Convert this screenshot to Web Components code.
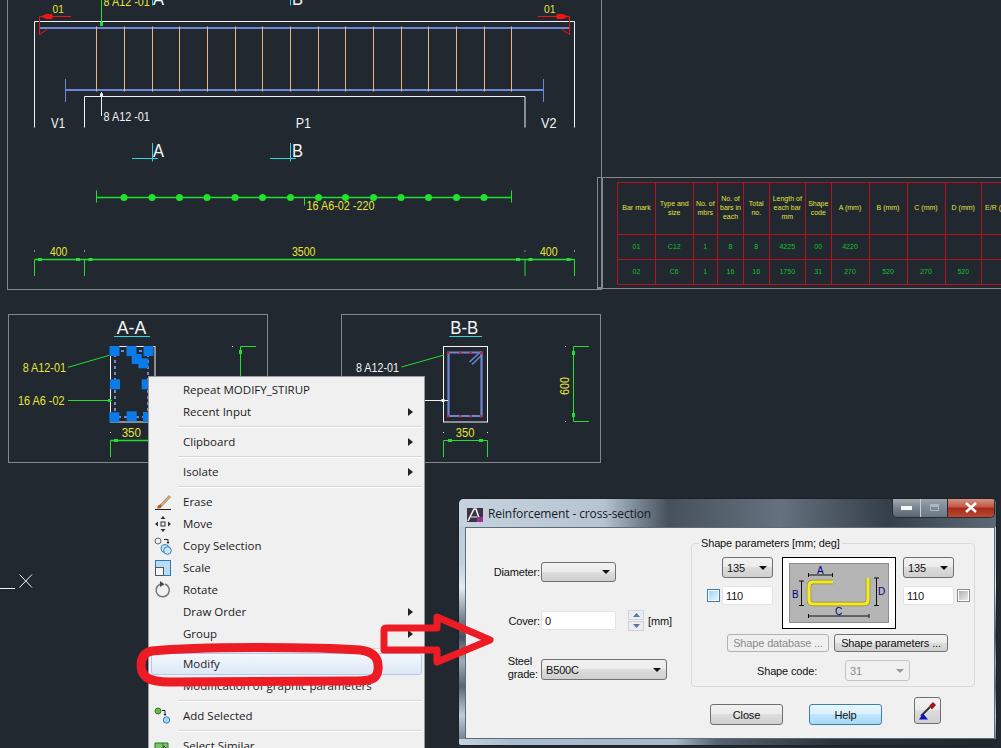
<!DOCTYPE html>
<html>
<head>
<meta charset="utf-8">
<title>Reinforcement</title>
<style>
  html, body { margin: 0; height: 100%; }
  body {
    width: 1001px; height: 748px; overflow: hidden; position: relative;
    background: #212830; font-family: "Liberation Sans", Arial, sans-serif;
  }
</style>
</head>
<body>
<cad-drawing></cad-drawing>
<cad-schedule></cad-schedule>

<ctx-menu>
  <ctx-item>Repeat MODIFY_STIRUP</ctx-item>
  <ctx-item arrow>Recent Input</ctx-item>
  <ctx-sep></ctx-sep>
  <ctx-item arrow>Clipboard</ctx-item>
  <ctx-sep></ctx-sep>
  <ctx-item arrow>Isolate</ctx-item>
  <ctx-sep></ctx-sep>
  <ctx-item>
    <svg slot="icon" width="18" height="18" viewBox="0 0 18 18"><path d="M1 16.5h16" stroke="#222" fill="none"/><path d="M6 12L15 2.5l1.6 1.6L8 13z" fill="#d8b078" stroke="#8a6a3c" stroke-width=".6"/><path d="M3.2 15.2c0-2.4 1.4-3.7 3-3.4l1.5 1.5c.2 1.7-2.2 2.4-4.5 1.9z" fill="#c8501c"/></svg>
    Erase
  </ctx-item>
  <ctx-item>
    <svg slot="icon" width="18" height="18" viewBox="0 0 18 18" fill="#333"><rect x="7" y="7" width="4" height="4" fill="none" stroke="#333"/><path d="M9 1l2.5 3h-5zM9 17l2.5-3h-5zM1 9l3-2.5v5zM17 9l-3-2.5v5z"/></svg>
    Move
  </ctx-item>
  <ctx-item>
    <svg slot="icon" width="18" height="18" viewBox="0 0 18 18" fill="none"><circle cx="4" cy="4" r="3" stroke="#666"/><path d="M10 2.5h4v3" stroke="#222"/><path d="M12.5 5l1.5 2 1.5-2z" fill="#222"/><circle cx="11" cy="11.5" r="4" stroke="#2a80c8" fill="#cfe6f8"/><circle cx="13.5" cy="13.5" r="3.8" stroke="#2a80c8" fill="#cfe6f8"/></svg>
    Copy Selection
  </ctx-item>
  <ctx-item>
    <svg slot="icon" width="18" height="18" viewBox="0 0 18 18"><rect x="1.5" y="1.5" width="15" height="15" fill="#b8dcf4" stroke="#2a7ab8"/><rect x="1.5" y="8.5" width="8" height="8" fill="#f4f4f4" stroke="#555"/></svg>
    Scale
  </ctx-item>
  <ctx-item>
    <svg slot="icon" width="18" height="18" viewBox="0 0 18 18" fill="none"><path d="M6 3.2A6.6 6.6 0 1 0 11 3" stroke="#777" stroke-width="1.5"/><path d="M6 0l4.5 3.2L6 6z" fill="#444"/></svg>
    Rotate
  </ctx-item>
  <ctx-item arrow>Draw Order</ctx-item>
  <ctx-item arrow>Group</ctx-item>
  <ctx-sep></ctx-sep>
  <ctx-item active>Modify</ctx-item>
  <ctx-item>Modification of graphic parameters</ctx-item>
  <ctx-sep></ctx-sep>
  <ctx-item>
    <svg slot="icon" width="18" height="18" viewBox="0 0 18 18" fill="none"><circle cx="4" cy="4" r="3" fill="#6cb84c" stroke="#3a7a28"/><path d="M8 3.5h3v4" stroke="#222"/><path d="M9.5 7l1.5 2 1.5-2z" fill="#222"/><circle cx="12.5" cy="13" r="3.2" fill="#a8d4f4" stroke="#2a80c8"/></svg>
    Add Selected
  </ctx-item>
  <ctx-sep></ctx-sep>
  <ctx-item>
    <svg slot="icon" width="18" height="18" viewBox="0 0 18 18"><path d="M1 6h13v9H1z" fill="#7cc46c" stroke="#2f6e2a"/><path d="M9 6v9" stroke="#2f6e2a"/><path d="M10 9l6 6h-6z" fill="#fff" stroke="#333"/></svg>
    Select Similar
  </ctx-item>
</ctx-menu>

<win-dialog title="Reinforcement - cross-section">
  <section-form></section-form>
</win-dialog>

<red-markup></red-markup>

<script>
// Inline cad helpers, everything on the model space goes through these
function line(x1, y1, x2, y2, color, w) {
  return `<line x1="${x1}" y1="${y1}" x2="${x2}" y2="${y2}" stroke="${color}" stroke-width="${w || 1}"/>`;
}
function label(x, base, str, color, size, len) {
  const fit = len ? `textLength="${len}" lengthAdjust="spacingAndGlyphs"` : '';
  return `<text x="${x}" y="${base}" fill="${color}" font-size="${size}" ${fit}>${str}</text>`;
}
function box(x, y, w, h, color) {
  return `<rect x="${x}" y="${y}" width="${w}" height="${h}" fill="${color}"/>`;
}

const WHITE = '#f2f4f4', GREEN = '#22e02c', YELLOW = '#e6e63a', BLUE = '#6f86d6';
const CYAN = '#35d4d8', RED = '#f01414', FRAME = '#83878b', GRIP = '#0c7bea', ORANGE = '#e9b67e';

class CadDrawing extends HTMLElement {
  constructor() {
    super();
    this.attachShadow({ mode: 'open' });
    this.shadowRoot.innerHTML = `
      <style>
        :host { display: block; position: absolute; left: 0; top: 0; width: 1001px; height: 748px; }
        svg { display: block; font-family: "Liberation Sans", Arial, sans-serif; }
      </style>
      <svg width="1001" height="748" viewBox="0 0 1001 748">
        ${this.elevation()}
        ${this.sectionA()}
        ${this.sectionB()}
        ${line(0, 588.5, 15, 588.5, WHITE)}
        ${line(19.5, 574.5, 32, 587.5, WHITE)}${line(32, 574.5, 19.5, 587.5, WHITE)}
      </svg>
    `;
  }

  elevation() {
    let s = '';
    // sheet frames
    s += line(7.5, 0, 7.5, 289.5, FRAME) + line(7, 289.5, 601.5, 289.5, FRAME) + line(601.5, 0, 601.5, 290, FRAME);
    s += `<path d="M34.5 127.5V21.5H574.5V127.5M84.5 127.5V96.5H525V127.5" fill="none" stroke="${WHITE}"/>`;
    // bars
    s += line(39, 28, 570, 28, BLUE, 2) + line(65.5, 90, 543.5, 90, BLUE, 2);
    s += line(65.5, 79, 65.5, 102, BLUE) + line(543.5, 79, 543.5, 102, BLUE);
    // stirrups
    [96.5, 124.5, 152.5, 179.5, 207.5, 235.5, 262.5, 290.5, 318.5, 345.5, 373.5, 401.5, 428.5, 456.5, 484.5, 511.5].forEach(x => {
      s += line(x, 26.5, x, 91.5, ORANGE);
    });
    // bar mark leaders
    s += line(101.5, 0, 101.5, 24, GREEN) + box(100, 22, 3, 4, GREEN);
    s += label(103.5, 6, '8 A12 -01', YELLOW, 12, 46.3);
    s += line(101.5, 92, 101.5, 116, WHITE) + box(100, 93.5, 3, 3, WHITE);
    s += label(103.5, 121, '8 A12 -01', WHITE, 12, 46.3);
    // red section ends
    s += label(52.5, 13, '01', YELLOW, 11.5, 11.3) + label(544, 13, '01', YELLOW, 11.5, 11.5);
    s += `<g fill="none" stroke="${RED}">
      <path d="M71 16.5H39.5V34.5L47.5 29M538 16.5H569.5V34.5L561.5 29"/>
      <path d="M42 16.5L46 14.5H52V18.5H46zM567 16.5L563 14.5H557V18.5H563z" fill="${RED}"/>
    </g>`;
    s += label(51, 128, 'V1', WHITE, 15, 14) + label(295.7, 128, 'P1', WHITE, 15, 15.3) + label(541, 128, 'V2', WHITE, 15, 15.5);
    // section marks, the upper pair runs off the sheet
    [[152.5, 132, 158, 'A', 153], [290.5, 270, 296, 'B', 292]].forEach(m => {
      s += line(m[0], 0, m[0], 5.5, CYAN) + label(m[4], 5, m[3], WHITE, 18, 11);
      s += line(m[0], 143, m[0], 161.5, CYAN) + line(m[1], 158.5, m[2], 158.5, CYAN);
      s += label(m[4], 157.3, m[3], WHITE, 18, 11);
    });
    // stirrup distribution
    s += line(96.5, 197.5, 511.5, 197.5, GREEN, 1.4) + line(96.5, 190.5, 96.5, 202.5, GREEN) + line(511.5, 190.5, 511.5, 202.5, GREEN);
    [124, 152, 179.5, 207, 235, 262.5, 290.5, 318.5, 345.5, 373.5, 401, 428.5, 456.5, 484].forEach(x => {
      s += `<circle cx="${x}" cy="197.5" r="3.5" fill="${GREEN}"/>`;
    });
    s += line(304.5, 197.5, 304.5, 205.5, GREEN) + label(306.5, 210, '16 A6-02 -220', YELLOW, 12, 68);
    // dimension line
    s += line(34.5, 259.5, 574.5, 259.5, GREEN, 1.4);
    [34.5, 84.5, 525, 574.5].forEach(x => {
      s += line(x, 259.5, x, 276, GREEN) + box(x - .5, 250.5, 1, 1, WHITE);
    });
    [38, 76, 88.5, 516, 528.5, 566.5].forEach(x => { s += box(x, 258, 4, 3, GREEN); });
    s += label(50, 256, '400', YELLOW, 12, 17.3) + label(292, 256, '3500', YELLOW, 12, 23.5) + label(540, 256, '400', YELLOW, 12, 17.6);
    return s;
  }

  sectionA() {
    let s = `<rect x="8.5" y="314.5" width="259" height="148" fill="none" stroke="${FRAME}"/>`;
    s += label(116.7, 334, 'A-A', WHITE, 18, 29.5) + line(114, 336.5, 150, 336.5, CYAN);
    s += `<rect x="110.5" y="346.5" width="44.5" height="75.5" fill="none" stroke="${WHITE}"/>`;
    s += `<rect x="115" y="351" width="33" height="66" fill="none" stroke="${BLUE}" stroke-width="2" stroke-dasharray="3 3"/>`;
    s += label(22.7, 372, '8 A12-01', YELLOW, 12, 43.3) + line(68, 367.3, 109.3, 355.3, GREEN);
    s += label(18, 405, '16 A6 -02', YELLOW, 12, 46.5) + line(68, 400.5, 112, 400.5, GREEN) + box(108, 399, 3, 3, GREEN);
    [[114.5, 351], [131.5, 351], [148.5, 351], [136.7, 359], [143.3, 363.3], [115, 384.3], [146.7, 384.3], [114.3, 417.3], [131.7, 416.3], [148, 417]].forEach(g => {
      s += box(g[0] - 5, g[1] - 5, 10, 10, GRIP);
    });
    s += label(121.7, 437, '350', YELLOW, 12, 19.3);
    s += line(110.5, 440.5, 155, 440.5, GREEN, 1.4) + line(110.5, 440.5, 110.5, 457, GREEN) + box(114, 439, 4, 3, GREEN);
    s += box(110, 432, 1, 1, WHITE);
    s += box(232, 346, 1, 1, WHITE) + line(240.5, 346.5, 256, 346.5, GREEN) + line(240.5, 346.5, 240.5, 421, GREEN) + box(239, 350, 3, 4, GREEN);
    return s;
  }

  sectionB() {
    let s = `<rect x="341.5" y="314.5" width="259" height="148" fill="none" stroke="${FRAME}"/>`;
    s += label(450.3, 334, 'B-B', WHITE, 18, 28) + line(449.3, 336.5, 482, 336.5, CYAN);
    s += `<rect x="443.5" y="346.5" width="44" height="75.5" fill="none" stroke="${WHITE}"/>`;
    s += `<path d="M481.5 352.5H448.5V416H481.5Z" fill="none" stroke="${BLUE}" stroke-width="2.2"/>`;
    s += line(469.5, 362, 481, 351.5, BLUE, 1.5) + line(472, 364.5, 482, 355, BLUE, 1.5);
    [448, 460, 470.3, 480.7].forEach(x => {
      s += box(x - 1, 351.5, 2.5, 2.5, '#d02040') + box(x - 1, 415, 2.5, 2.5, '#d02040');
    });
    s += label(356, 372, '8 A12-01', WHITE, 12, 43) + line(401.5, 367, 444, 355, GREEN);
    s += line(425, 400.5, 448, 400.5, WHITE) + box(441.5, 399, 3, 3, WHITE);
    s += label(455.7, 437, '350', YELLOW, 12, 18.7);
    s += `<path d="M443.5 457V440.5H487.5V457" fill="none" stroke="${GREEN}"/>` + box(448, 439, 4, 3, GREEN) + box(479, 439, 4, 3, GREEN);
    s += box(443, 432, 1, 1, WHITE) + box(487, 432, 1, 1, WHITE);
    s += `<text transform="translate(568.5 395) rotate(-90)" fill="${YELLOW}" font-size="12" textLength="18" lengthAdjust="spacingAndGlyphs">600</text>`;
    s += `<path d="M589 346.5H573.5V421.5H589" fill="none" stroke="${GREEN}"/>` + box(572, 351, 3, 4, GREEN) + box(572, 413, 3, 4, GREEN);
    s += box(565, 346, 1, 1, WHITE) + box(565, 421, 1, 1, WHITE);
    return s;
  }
}
customElements.define('cad-drawing', CadDrawing);

class CadSchedule extends HTMLElement {
  constructor() {
    super();
    const heads = ['Bar mark', 'Type and<br>size', 'No. of<br>mbrs', 'No. of<br>bars in<br>each', 'Total<br>no.', 'Length of<br>each bar<br>mm', 'Shape<br>code', 'A (mm)', 'B (mm)', 'C (mm)', 'D (mm)', 'E/R (mm)'];
    const rows = [
      ['01', 'C12', '1', '8', '8', '4225', '00', '4220', '', '', '', ''],
      ['02', 'C6', '1', '16', '16', '1750', '31', '270', '520', '270', '520', '']
    ];
    const cells = heads.map(h => `<div class="head">${h}</div>`).join('') +
      rows.map(r => r.map(c => `<div>${c}</div>`).join('')).join('');
    this.attachShadow({ mode: 'open' });
    this.shadowRoot.innerHTML = `
      <style>
        :host { display: block; position: absolute; left: 617px; top: 182px; }
        .outer { position: absolute; left: -20.5px; top: -5px; width: 500px; height: 112px; border: 1px solid #83878b; border-width: 1px 0; box-sizing: border-box; }
        .outer::before { content: ""; position: absolute; left: 0; top: 0; width: 6px; height: 100%; box-sizing: border-box; border: 1px solid #83878b; border-top: 0; }
        .grid {
          position: relative; display: grid; width: 401px;
          grid-template-columns: 38px 37.5px 24.5px 26px 25.5px 36.5px 25.5px 38px 38px 38px 36.5px 37px;
          grid-template-rows: 52px 25px 25px;
          border: solid #b8121e; border-width: 1px 0 0 1px;
          font: 7px/8.7px "Liberation Sans", Arial, sans-serif; color: #10c42c;
        }
        .grid div {
          display: flex; align-items: center; justify-content: center; text-align: center;
          box-sizing: border-box; border: solid #b8121e; border-width: 0 1px 1px 0; white-space: nowrap;
        }
        .grid .head { color: #e4e23c; }
      </style>
      <div class="outer"></div>
      <div class="grid">${cells}</div>
    `;
  }
}
customElements.define('cad-schedule', CadSchedule);

class CtxMenu extends HTMLElement {
  constructor() {
    super();
    this.attachShadow({ mode: 'open' });
    this.shadowRoot.innerHTML = `
      <style>
        :host {
          display: block; position: absolute; left: 148px; top: 376px; width: 277px; height: 390px;
          box-sizing: border-box; padding: 2px; background: #f0f0f0; border: 1px solid #9b9b9b;
          font: 11.5px "Open Sans", sans-serif; color: #1b1b1b;
        }
      </style>
      <slot></slot>
    `;
  }
}
customElements.define('ctx-menu', CtxMenu);

class CtxItem extends HTMLElement {
  constructor() {
    super();
    this.attachShadow({ mode: 'open' });
    this.shadowRoot.innerHTML = `
      <style>
        :host { display: flex; align-items: center; height: 22px; box-sizing: border-box; padding-right: 8px; border: 1px solid transparent; border-radius: 3px; }
        :host([active]) { border-color: #aecbec; background: linear-gradient(#f3f7fc, #dde8f5); }
        .icon { flex: 0 0 31px; display: flex; align-items: center; padding-left: 2px; box-sizing: border-box; height: 18px; }
        .text { flex: 1; white-space: nowrap; margin-top: -2px; }
        .arrow { display: none; width: 0; height: 0; border: 4px solid transparent; border-left: 5px solid #222; border-right: 0; }
        :host([arrow]) .arrow { display: block; }
      </style>
      <div class="icon"><slot name="icon"></slot></div>
      <div class="text"><slot></slot></div>
      <div class="arrow"></div>
    `;
  }
}
customElements.define('ctx-item', CtxItem);

class CtxSep extends HTMLElement {
  constructor() {
    super();
    this.attachShadow({ mode: 'open' });
    this.shadowRoot.innerHTML = `
      <style>
        :host { display: flex; align-items: center; height: 8px; padding-left: 27px; }
        div { flex: 1; height: 1px; background: #d7d7d7; border-bottom: 1px solid #fff; }
      </style>
      <div></div>
    `;
  }
}
customElements.define('ctx-sep', CtxSep);

class WinDialog extends HTMLElement {
  constructor() {
    super();
    this.attachShadow({ mode: 'open' });
    this.shadowRoot.innerHTML = `
      <style>
        :host {
          display: flex; flex-direction: column; position: absolute; left: 458px; top: 498px; width: 539px; height: 248px;
          box-sizing: border-box; border: 1px solid #1c2126; border-radius: 6px 6px 3px 3px; overflow: hidden;
          background: linear-gradient(180deg, #bccbd8 0, #c2d0dc 26%, #e6eaee 36%, #8b98a6 46%, #47515b 56%, #a3adb7 66%, #5a6672 76%, #c0ccd8 88%, #64727f 100%);
          font: 11px "Liberation Sans", Arial, sans-serif; letter-spacing: -.15px; color: #111;
        }
        .title {
          flex: 0 0 28px; display: flex; align-items: center; gap: 5px; padding: 3px 0 0 8px; box-sizing: border-box; position: relative;
          background:
            linear-gradient(90deg, transparent 27%, rgba(40,50,60,.78) 39%, rgba(60,70,82,.6) 60%, rgba(35,45,55,.85) 80%, rgba(60,70,80,.6) 100%),
            linear-gradient(90deg, #c6d3de, #aebdcc 40%, #8d9cac);
        }
        .title span { font: 12px "Open Sans", sans-serif; color: #161a1e; letter-spacing: -.1px; margin-top: -2px; }
        .caps { position: absolute; right: 1px; top: -1px; display: flex; height: 20px; width: 103px; box-sizing: border-box; border: 1px solid #262c32; border-top: 0; border-radius: 0 0 5px 5px; overflow: hidden; }
        .caps div { display: flex; align-items: center; justify-content: center; }
        .min { width: 27px; background: linear-gradient(#a8b0b8, #7c8690 50%, #59636d); border-right: 1px solid #c8d0d8; }
        .max { width: 26px; background: linear-gradient(#9aa6b0, #7f8c98 50%, #6a7884); border-right: 1px solid #262c32; }
        .close { flex: 1; background: linear-gradient(#d59a8c, #c55a48 45%, #a92a1a 55%, #b84a34); }
        .client { flex: 1; margin: 0 1px 0 6px; background: #f0f0f0; border: 1px solid #5d6a78; }
        .foot { flex: 0 0 6px; background: linear-gradient(90deg, #c6d3de 0, #a9bccd 10%, #a9b9c9 40%, #56626e 48%, #2b333b 70%, #1f262c 100%); }
      </style>
      <div class="title">
        <svg width="16" height="14" viewBox="0 0 16 14"><rect width="16" height="14" fill="#3d3346"/><path d="M1 13L7 1h2l3 9" fill="none" stroke="#f1eff3" stroke-width="1.6"/><path d="M4 9h6" stroke="#f1eff3"/><rect x="10" y="9" width="6" height="5" fill="#a0308c"/></svg>
        <span>${this.getAttribute('title')}</span>
        <div class="caps">
          <div class="min"><svg width="11" height="4"><rect width="11" height="4" fill="#f4f6f8"/></svg></div>
          <div class="max"><svg width="9" height="7"><rect x=".5" y=".5" width="8" height="6" fill="none" stroke="#aeb6be"/><rect x="1" y="1" width="7" height="2" fill="#aeb6be"/></svg></div>
          <div class="close"><svg width="14" height="11" viewBox="0 0 14 11"><path d="M2 1l10 9M12 1L2 10" stroke="#fff" stroke-width="2.6"/></svg></div>
        </div>
      </div>
      <div class="client"><slot></slot></div>
      <div class="foot"></div>
    `;
  }
}
customElements.define('win-dialog', WinDialog);

class WinButton extends HTMLElement {
  constructor() {
    super();
    this.attachShadow({ mode: 'open' });
    this.shadowRoot.innerHTML = `
      <style>
        :host {
          display: flex; align-items: center; justify-content: center; box-sizing: border-box;
          border: 1px solid #707070; border-radius: 3px; white-space: nowrap;
          background: linear-gradient(#f2f2f2, #ebebeb 49%, #ddd 50%, #cfcfcf);
        }
        :host([hot]) { border-color: #3c7fb1; background: linear-gradient(#eaf6fd, #d9f0fc 49%, #bee6fd 50%, #a7d9f5); }
        :host([disabled]) { border-color: #adb2b5; background: #f0f0f0; color: #8a8a8a; }
      </style>
      <slot></slot>
    `;
  }
}
customElements.define('win-button', WinButton);

class WinSelect extends HTMLElement {
  constructor() {
    super();
    this.attachShadow({ mode: 'open' });
    this.shadowRoot.innerHTML = `
      <style>
        :host {
          display: flex; align-items: center; box-sizing: border-box; padding: 0 5px 0 4px;
          border: 1px solid #707070; border-radius: 3px;
          background: linear-gradient(#f2f2f2, #ebebeb 49%, #ddd 50%, #cfcfcf);
        }
        :host([disabled]) { border-color: #c4c4c4; background: #f0f0f0; color: #8a8a8a; }
        .value { flex: 1; }
        i { width: 0; height: 0; border: 4px solid transparent; border-top: 4px solid #111; border-bottom: 0; }
        :host([disabled]) i { border-top-color: #9a9a9a; }
      </style>
      <div class="value"><slot></slot></div>
      <i></i>
    `;
  }
}
customElements.define('win-select', WinSelect);

class WinInput extends HTMLElement {
  constructor() {
    super();
    this.attachShadow({ mode: 'open' });
    this.shadowRoot.innerHTML = `
      <style>
        :host { display: flex; align-items: center; box-sizing: border-box; padding-left: 3px; background: #fff; border: 1px solid #e2e3e5; border-radius: 2px; }
      </style>
      <slot></slot>
    `;
  }
}
customElements.define('win-input', WinInput);

class WinCheck extends HTMLElement {
  constructor() {
    super();
    this.attachShadow({ mode: 'open' });
    this.shadowRoot.innerHTML = `
      <style>
        :host { display: block; width: 13px; height: 13px; box-sizing: border-box; border: 1px solid #8e8f8f; background: #fff; padding: 1px; }
        :host([hot]) { border-color: #3c7fb1; }
        div { height: 100%; background: linear-gradient(135deg, #b0b0b0, #ececec); }
        :host([hot]) div { background: linear-gradient(135deg, #9fd4f6, #e6f5fd); }
      </style>
      <div></div>
    `;
  }
}
customElements.define('win-check', WinCheck);

class WinSpin extends HTMLElement {
  constructor() {
    super();
    this.attachShadow({ mode: 'open' });
    this.shadowRoot.innerHTML = `
      <style>
        :host { display: flex; flex-direction: column; gap: 1px; width: 16px; height: 21px; flex: none; }
        div { flex: 1; display: flex; align-items: center; justify-content: center; border: 1px solid #d4d4d4; background: #e7edf3; }
        svg { display: block; }
      </style>
      <div><svg width="7" height="4"><path d="M3.5 0L7 4H0z" fill="#5f6f9f"/></svg></div>
      <div><svg width="7" height="4"><path d="M0 0h7L3.5 4z" fill="#5f6f9f"/></svg></div>
    `;
  }
}
customElements.define('win-spin', WinSpin);

class ShapePreview extends HTMLElement {
  constructor() {
    super();
    this.attachShadow({ mode: 'open' });
    this.shadowRoot.innerHTML = `
      <style>
        :host { display: block; width: 114px; height: 72px; box-sizing: border-box; background: #fff; border: 1px solid #000; padding: 5px 6px; }
        svg { display: block; font: 10px "Liberation Sans", Arial, sans-serif; }
      </style>
      <svg width="100" height="60" viewBox="0 0 100 60">
        <rect x=".5" y=".5" width="99" height="59" fill="#b5b5b5" stroke="#8d8d8d"/>
        <path d="M44 19H24Q20 19 20 23V37Q20 41 24 41H75Q79 41 79 37V15" fill="none" stroke="#8f8a2a" stroke-width="4.4"/>
        <path d="M44 19H24Q20 19 20 23V37Q20 41 24 41H75Q79 41 79 37V15" fill="none" stroke="#f2ea2c" stroke-width="3.2"/>
        <g stroke="#111" fill="none">
          <path d="M19.5 12H43.5M19.5 10V14M43.5 10V14"/>
          <path d="M12.5 18V42.5M10 18H15M10 42.5H15"/>
          <path d="M19.5 53H80M19.5 51V55M80 51V55"/>
          <path d="M87.5 15V42.5M85 15H90M85 42.5H90"/>
        </g>
        <g fill="#000080">
          <text x="28" y="11">A</text><text x="3" y="35">B</text>
          <text x="46" y="52">C</text><text x="89" y="32">D</text>
        </g>
      </svg>
    `;
  }
}
customElements.define('shape-preview', ShapePreview);

class SectionForm extends HTMLElement {
  constructor() {
    super();
    this.attachShadow({ mode: 'open' });
    this.shadowRoot.innerHTML = `
      <style>
        :host { display: grid; grid-template-columns: 225px 284px; align-items: start; }
        .left {
          display: grid; grid-template-columns: 74px 126px; column-gap: 1px; row-gap: 29px;
          grid-template-rows: 20px 19px 21px; align-items: center; padding-top: 34px;
        }
        .left .lab { text-align: right; white-space: nowrap; }
        .steel { justify-self: end; line-height: 13px; margin-top: -3px; margin-right: 2px; }
        .cover { display: flex; align-items: center; white-space: nowrap; }
        .cover win-input { flex: none; width: 75px; height: 19px; }
        .cover win-spin { margin: 0 4px 0 12px; }
        win-select.dia { width: 75px; height: 20px; }
        win-select.grade { width: 126px; height: 21px; }
        fieldset {
          margin: 9px 0 0; padding: 8px 0 0 15px; height: 150px; box-sizing: border-box;
          border: 1px solid #d9d9d9; border-radius: 4px; min-width: 0;
        }
        legend { padding: 0 2px; margin-left: -8px; white-space: nowrap; }
        .shape {
          display: grid; grid-template-columns: 15px 51px 9px 114px 7px 51px 3px 13px;
          grid-template-rows: 21px 8px 19px 24px; align-items: center;
        }
        .shape win-select { height: 21px; grid-row: 1; }
        .shape win-input { height: 19px; grid-row: 3; }
        .shape win-check { grid-row: 3; }
        .shape shape-preview { grid-row: 1 / 5; grid-column: 4; }
        .btns { display: flex; gap: 5px; margin: 5px 0 0 20px; }
        .btns win-button { height: 18px; }
        .code { display: flex; align-items: center; margin: 8px 0 0 50px; }
        .code span { width: 88px; }
        .code win-select { width: 65px; height: 21px; }
        .bottom { grid-column: 1 / -1; display: flex; align-items: flex-start; padding: 10px 0 0 244px; }
        .bottom .push { width: 73px; height: 21px; margin-top: 7px; }
        .pick { width: 27px; height: 27px; margin-left: 32px; }
      </style>
      <div class="left">
        <span class="lab">Diameter:</span>
        <win-select class="dia"></win-select>
        <span class="lab">Cover:</span>
        <div class="cover"><win-input>0</win-input><win-spin></win-spin><span>[mm]</span></div>
        <span class="steel">Steel<br>grade:</span>
        <win-select class="grade">B500C</win-select>
      </div>
      <fieldset>
        <legend>Shape parameters [mm; deg]</legend>
        <div class="shape">
          <win-select style="grid-column:2">135</win-select>
          <win-select style="grid-column:6">135</win-select>
          <win-check hot style="grid-column:1"></win-check>
          <win-input style="grid-column:2">110</win-input>
          <shape-preview></shape-preview>
          <win-input style="grid-column:6">110</win-input>
          <win-check style="grid-column:8"></win-check>
        </div>
        <div class="btns">
          <win-button disabled style="width:102px">Shape database ...</win-button>
          <win-button style="width:114px">Shape parameters ...</win-button>
        </div>
        <div class="code"><span>Shape code:</span><win-select disabled>31</win-select></div>
      </fieldset>
      <div class="bottom">
        <win-button class="push">Close</win-button>
        <win-button class="push" hot style="margin-left:26px">Help</win-button>
        <win-button class="pick">
          <svg width="20" height="20" viewBox="0 0 20 20">
            <path d="M3 15L12 6" stroke="#333" stroke-width="2"/>
            <path d="M11 5l4-4 3 3-4 4.5z" fill="#a01818"/>
            <path d="M1 18.5l4-6 5 6z" fill="#0a14c0"/>
          </svg>
        </win-button>
      </div>
    `;
  }
}
customElements.define('section-form', SectionForm);

// hand drawn annotation on top of everything
class RedMarkup extends HTMLElement {
  constructor() {
    super();
    this.attachShadow({ mode: 'open' });
    this.shadowRoot.innerHTML = `
      <style>
        :host { display: block; position: absolute; left: 0; top: 0; width: 1001px; height: 748px; pointer-events: none; }
      </style>
      <svg width="1001" height="748" viewBox="0 0 1001 748" fill="none" stroke="#ed1c24" stroke-linejoin="round" stroke-linecap="round">
        <path stroke-width="9" d="M152 651C200 646 320 647 360 650C376 652 379 660 378 670C377 680 370 681 350 681L170 682C147 682 141 676 141 665C141 656 146 652 152 651Z"/>
        <path stroke-width="7" d="M384 648V630Q384 628 387 628H437V617L490 640L437 662V650H384"/>
      </svg>
    `;
  }
}
customElements.define('red-markup', RedMarkup);
</script>
</body>
</html>
